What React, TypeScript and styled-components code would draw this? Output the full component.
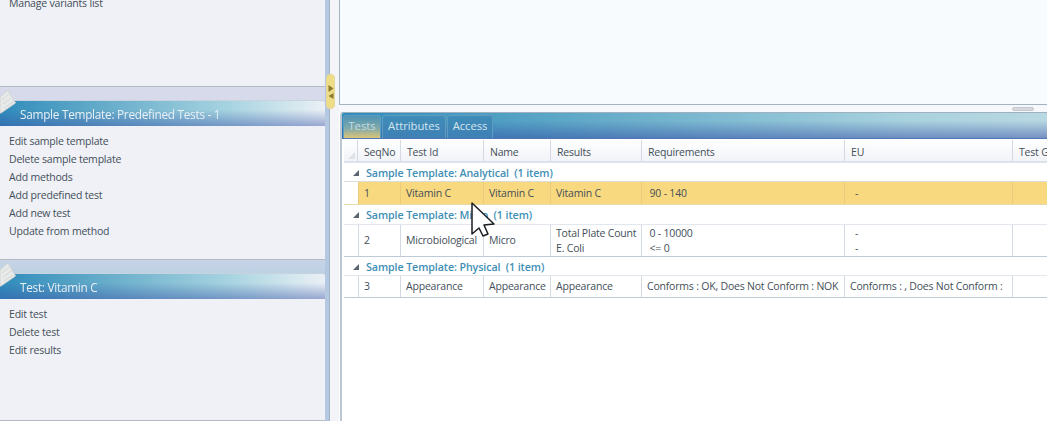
import React from 'react';
import { createGlobalStyle, styled } from 'styled-components';

const GlobalStyle = createGlobalStyle`
  html, body {
    margin: 0;
    padding: 0;
    background: #fff;
  }
  body {
    font-family: 'Open Sans', 'Liberation Sans', sans-serif;
    font-size: 10.5px;
    letter-spacing: -0.2px;
    color: #444f59;
  }
`;

const Window = styled.div`
  position: relative;
  display: flex;
  width: 1047px;
  height: 421px;
  overflow: hidden;
  filter: blur(0.4px);
`;

const Sidebar = styled.aside`
  display: flex;
  flex-direction: column;
  width: 325px;
  flex-shrink: 0;
  background: linear-gradient(#d6daeb 0, #d6daeb 100px, #c6d4e6 260px, #b9d0e4 280px);
`;

const Panel = styled.section<{ $height: number; $gap?: number }>`
  display: flex;
  flex-direction: column;
  height: ${(p) => p.$height}px;
  padding-bottom: ${(p) => p.$gap ?? 0}px;
  box-sizing: border-box;
  flex-shrink: 0;
`;

const Header = styled.header`
  position: relative;
  height: 26px;
  flex-shrink: 0;
  box-sizing: border-box;
  padding-left: 20px;
  display: flex;
  align-items: center;
  color: #e8f1f6;
  font-size: 11.8px;
  letter-spacing: -0.27px;
  border-top: 1px solid #c8d3dd;
  border-top-right-radius: 3px;
  background: linear-gradient(to bottom, rgba(60, 90, 170, 0) 35%, rgba(55, 80, 165, 0.45) 100%),
    linear-gradient(to right, #2f8cbc, #5aa5c6 25%, #a6d3e0 70%, #eaf0f5);
`;

const NoteIcon = styled.svg`
  position: absolute;
  left: 0;
  top: -13px;
`;

const Body = styled.div`
  flex: 1;
  min-height: 0;
  overflow: hidden;
  background: #eff1f6;
  border-bottom: 1px solid #b4b9c2;
  padding-left: 9px;
`;

const ActionList = styled.ul<{ $offset?: number }>`
  list-style: none;
  margin: ${(p) => p.$offset ?? 6}px 0 0;
  padding: 0;
`;

const Action = styled.li`
  height: 18px;
  line-height: 18px;
  white-space: nowrap;
`;

const Divider = styled.div`
  width: 5px;
  flex-shrink: 0;
  background: #b5c8e2;
  border-right: 1px solid #a6b3c4;
  box-sizing: border-box;
`;

const Gutter = styled.div`
  width: 9px;
  flex-shrink: 0;
  background: #f3f4f7;
`;

const Handle = styled.div`
  position: absolute;
  left: 326px;
  top: 74px;
  width: 9px;
  height: 35px;
  border-radius: 4px;
  background: #efdc86;
  border: 1px solid #e6d698;
  box-sizing: border-box;
`;

const HandleArrows = styled.svg`
  display: block;
`;

const Main = styled.main`
  flex: 1;
  min-width: 0;
  display: flex;
  flex-direction: column;
`;

const TopPane = styled.div`
  height: 105px;
  flex-shrink: 0;
  box-sizing: border-box;
  background: #f8fbfe;
  border-left: 1px solid #a3b3bf;
  border-bottom: 1px solid #a3b3bf;
`;

const Grip = styled.div`
  height: 7px;
  flex-shrink: 0;
  display: flex;
  justify-content: flex-end;
  align-items: center;
  padding-right: 13px;
  background: #f6f8fb;
  &::after {
    content: '';
    width: 22px;
    height: 4px;
    border-radius: 2px;
    background: #d5d9de;
    border: 1px solid #c3c8cf;
    box-sizing: border-box;
  }
`;

const TabPanel = styled.div`
  flex: 1;
  min-height: 0;
  margin-left: 1px;
  display: flex;
  flex-direction: column;
  border-left: 2px solid #bcc7d1;
  border-top: 1px solid #9fb1bf;
  border-top-left-radius: 3px;
  background: #fff;
  overflow: hidden;
`;

const TabBar = styled.div`
  height: 26px;
  flex-shrink: 0;
  box-sizing: border-box;
  display: flex;
  align-items: flex-end;
  gap: 1px;
  padding: 2px 0 0 1px;
  border-bottom: 1px solid #4f78b4;
  background: linear-gradient(to bottom, rgba(60, 90, 170, 0) 30%, rgba(50, 75, 165, 0.5) 100%),
    linear-gradient(to right, #2f8cbc, #5ba6c6 30%, #a9d2de 80%, #b9d8e2);
`;

const Tab = styled.div<{ $active?: boolean; $width: number }>`
  width: ${(p) => p.$width}px;
  height: 23px;
  box-sizing: border-box;
  display: flex;
  align-items: center;
  justify-content: center;
  padding-bottom: 3px;
  font-size: 11.2px;
  letter-spacing: 0;
  border: 1px solid #5f9cc0;
  border-bottom: 0;
  border-radius: 3px 3px 0 0;
  color: ${(p) => (p.$active ? '#c3dbe2' : '#d5e6ee')};
  background: ${(p) =>
    p.$active ? 'linear-gradient(#4f93b4 0, #7fa9aa 55%, #dcc478 100%)' : 'linear-gradient(#3f8db8, #3f80b5)'};
`;

const Table = styled.div`
  margin-left: 2px;
  width: 760px;
  padding-top: 1px;
`;

const columns = '14px 43px 83px 67px 91px 203px 168px 91px';

const HeaderRow = styled.div`
  display: grid;
  grid-template-columns: ${columns};
  height: 23px;
  box-sizing: border-box;
  border-bottom: 2px solid #dde3ea;
  background: linear-gradient(#ffffff, #f1f3f8);
`;

const HeaderCell = styled.div`
  display: flex;
  align-items: center;
  padding: 2px 0 0 6px;
  border-right: 1px solid #d4dae3;
  white-space: nowrap;
  overflow: hidden;
`;

const Corner = styled.div`
  position: relative;
  border-right: 1px solid #d4dae3;
  &::after {
    content: '';
    position: absolute;
    right: 2px;
    bottom: 2px;
    border-style: solid;
    border-width: 0 0 7px 7px;
    border-color: transparent transparent #dfe2e7 transparent;
  }
`;

const GroupRow = styled.div<{ $height: number }>`
  display: flex;
  align-items: center;
  height: ${(p) => p.$height}px;
  box-sizing: border-box;
  padding: 1px 0 0 9px;
  gap: 7px;
  color: #3f8fb5;
  font-weight: 600;
  font-size: 10.7px;
  letter-spacing: -0.1px;
  white-space: pre;
`;

const Collapse = styled.span`
  width: 0;
  height: 0;
  border-style: solid;
  border-width: 0 0 6px 6px;
  border-color: transparent transparent #5a6570 transparent;
`;

const DataRow = styled.div<{ $selected?: boolean; $height: number }>`
  display: grid;
  grid-template-columns: ${columns};
  height: ${(p) => p.$height}px;
  box-sizing: border-box;
  border-top: 1px solid ${(p) => (p.$selected ? '#dcdcd8' : '#e2e7ee')};
  border-bottom: 1px solid ${(p) => (p.$selected ? '#e4d9a8' : '#bfcad8')};
  background: linear-gradient(
    to right,
    #fff 14px,
    ${(p) => (p.$selected ? '#f9d97f' : '#fff')} 14px
  );
`;

const Spacer = styled.div``;

const Cell = styled.div<{ $selected?: boolean }>`
  display: flex;
  flex-direction: column;
  justify-content: center;
  padding-left: 5px;
  line-height: 14.5px;
  white-space: pre;
  overflow: hidden;
  box-sizing: border-box;
  border-right: 1px solid ${(p) => (p.$selected ? '#e8cc7c' : '#d4dae3')};
  &:nth-child(2) {
    border-left: 1px solid ${(p) => (p.$selected ? '#e8cc7c' : '#d4dae3')};
  }
`;

const Cursor = styled.svg`
  position: absolute;
  left: 471px;
  top: 202px;
`;

const testColumns = ['SeqNo', 'Test Id', 'Name', 'Results', 'Requirements', 'EU', 'Test Group'];

const nbsp = '\u00a0';

const groups = [
  {
    title: 'Sample Template: Analytical',
    groupHeight: 18,
    rowHeight: 24,
    selected: true,
    cells: [['1'], ['Vitamin C'], ['Vitamin C'], ['Vitamin C'], [nbsp + '90 - 140'], [nbsp + nbsp + '-'], []],
  },
  {
    title: 'Sample Template: Micro',
    groupHeight: 19,
    rowHeight: 33,
    selected: false,
    cells: [
      ['2'],
      ['Microbiological'],
      ['Micro'],
      ['Total Plate Count', 'E. Coli'],
      [nbsp + '0 - 10000', nbsp + '<= 0'],
      [nbsp + nbsp + '-', nbsp + nbsp + '- '],
      [],
    ],
  },
  {
    title: 'Sample Template: Physical',
    groupHeight: 18,
    rowHeight: 23,
    selected: false,
    cells: [
      ['3'],
      ['Appearance'],
      ['Appearance'],
      ['Appearance'],
      ['Conforms : OK, Does Not Conform : NOK'],
      ['Conforms : , Does Not Conform :'],
      [],
    ],
  },
];

const Note = () => (
  <NoteIcon width="18" height="26" viewBox="0 0 18 26">
    <path d="M0 9 L8 2 L15.5 15 L1 25 L0 25 Z" fill="#e8eaea" stroke="#cfd2d2" />
    <path d="M2 12 L9 6 M3 16 L11 10 M4 20 L13 14" stroke="#d3d6d6" strokeWidth="1" fill="none" />
  </NoteIcon>
);

const ActionPanel = ({
  title,
  actions,
  height,
  gap,
}: {
  title: string;
  actions: string[];
  height: number;
  gap?: number;
}) => (
  <Panel $height={height} $gap={gap}>
    <Header>
      <Note />
      {title}
    </Header>
    <Body>
      <ActionList>
        {actions.map((a) => (
          <Action key={a}>{a}</Action>
        ))}
      </ActionList>
    </Body>
  </Panel>
);

export default function App() {
  return (
    <>
      <GlobalStyle />
      <Window>
        <Sidebar>
          <Panel $height={100} $gap={13}>
            <Body>
              <ActionList $offset={-6}>
                <Action>Manage variants list</Action>
              </ActionList>
            </Body>
          </Panel>
          <ActionPanel
            height={173}
            gap={13}
            title="Sample Template: Predefined Tests - 1"
            actions={[
              'Edit sample template',
              'Delete sample template',
              'Add methods',
              'Add predefined test',
              'Add new test',
              'Update from method',
            ]}
          />
          <ActionPanel height={148} title="Test: Vitamin C" actions={['Edit test', 'Delete test', 'Edit results']} />
        </Sidebar>
        <Divider />
        <Gutter />
        <Main>
          <TopPane />
          <Grip />
          <TabPanel>
            <TabBar>
              <Tab $active $width={38}>
                Tests
              </Tab>
              <Tab $width={64}>Attributes</Tab>
              <Tab $width={46}>Access</Tab>
            </TabBar>
            <Table>
              <HeaderRow>
                <Corner />
                {testColumns.map((c) => (
                  <HeaderCell key={c}>{c}</HeaderCell>
                ))}
              </HeaderRow>
              {groups.map((g) => (
                <React.Fragment key={g.title}>
                  <GroupRow $height={g.groupHeight}>
                    <Collapse />
                    {g.title}
                    {'  (1 item)'}
                  </GroupRow>
                  <DataRow $selected={g.selected} $height={g.rowHeight}>
                    <Spacer />
                    {g.cells.map((lines, i) => (
                      <Cell key={i} $selected={g.selected}>
                        {lines.map((l) => (
                          <span key={l}>{l}</span>
                        ))}
                      </Cell>
                    ))}
                  </DataRow>
                </React.Fragment>
              ))}
            </Table>
          </TabPanel>
        </Main>
        <Handle>
          <HandleArrows width="7" height="33" viewBox="0 0 7 33">
            <path d="M1.5 10 L6.5 13.5 L1.5 17 Z" fill="#8a7a2e" />
            <path d="M6.5 18 L1.5 21 L6.5 24 Z" fill="#8a7a2e" />
          </HandleArrows>
        </Handle>
        <Cursor width="26" height="36" viewBox="0 0 26 36">
          <path
            d="M1 1 L1 32 L8 26 L12 34 L17 32 L13 23 L23 22 Z"
            fill="#fff"
            stroke="#1a1d22"
            strokeWidth="1.5"
            strokeLinejoin="round"
          />
        </Cursor>
      </Window>
    </>
  );
}
